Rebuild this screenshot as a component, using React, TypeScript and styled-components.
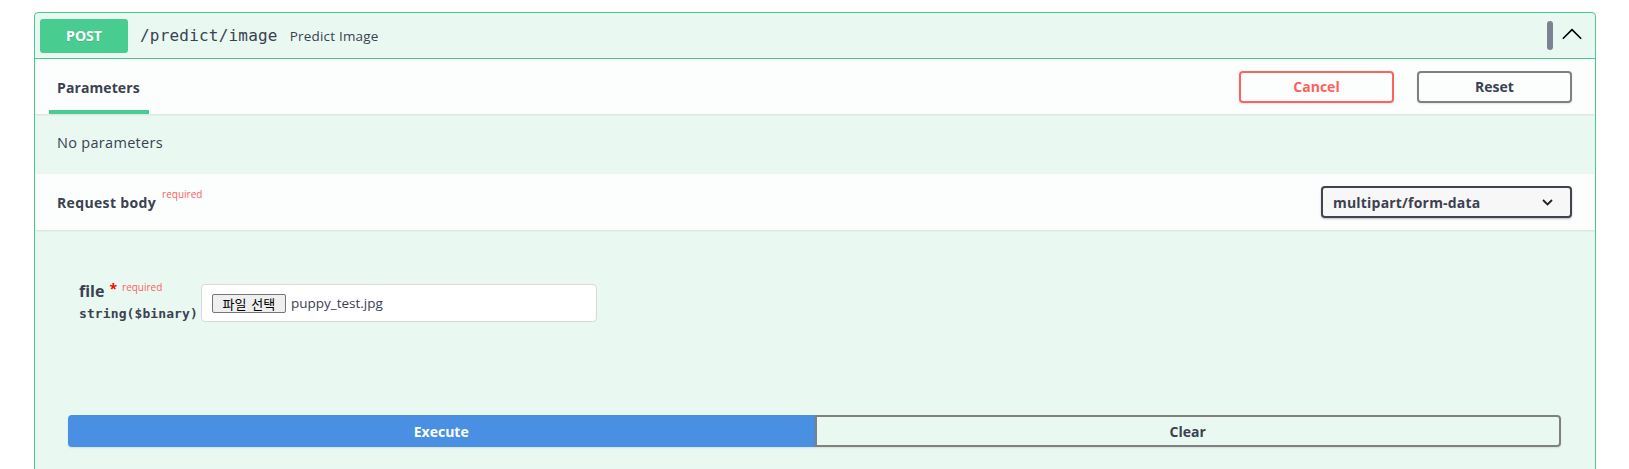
import React from "react";
import styled, { createGlobalStyle } from "styled-components";

const GlobalStyle = createGlobalStyle`
  html, body { margin: 0; padding: 0; background: #ffffff; }
  body { font-family: "Open Sans", "Noto Sans", "Noto Sans CJK KR", sans-serif; color: #3b4151; }
  * { box-sizing: border-box; }
`;

const Page = styled.div`
  padding: 12px 33px 0 34px;
`;

const OpBlock = styled.section`
  border: 1px solid #49cc90;
  border-radius: 4px;
  background: rgba(73, 204, 144, 0.12);
`;

const Summary = styled.div`
  display: flex;
  align-items: center;
  height: 46px;
  padding: 0 13px 0 5px;
  border-bottom: 1px solid #49cc90;
`;

const Method = styled.span`
  width: 88px;
  height: 34px;
  border-radius: 3px;
  background: #49cc90;
  color: #fff;
  font-size: 14px;
  font-weight: 700;
  display: flex;
  align-items: center;
  justify-content: center;
  text-shadow: 0 1px 0 rgba(0, 0, 0, 0.1);
`;

const Path = styled.span`
  margin-left: 12px;
  font-family: "DejaVu Sans Mono", "Liberation Mono", monospace;
  font-size: 16px;
  letter-spacing: 0.2px;
  color: #3b4151;
`;

const Desc = styled.span`
  margin-left: 12px;
  font-size: 13.5px;
  letter-spacing: 0.2px;
  color: #3b4151;
`;

const Spacer = styled.div`
  flex: 1;
`;

const CopyPill = styled.span`
  width: 6px;
  height: 29px;
  border-radius: 3px;
  background: #7d8293;
  margin-right: 9px;
`;

const Arrow = styled.svg`
  width: 20px;
  height: 20px;
  display: block;
`;

const SectionHeader = styled.div<{ $h: number; $pl: number }>`
  display: flex;
  align-items: center;
  justify-content: space-between;
  height: ${(p) => p.$h}px;
  padding: 0 23px 0 ${(p) => p.$pl}px;
  background: rgba(255, 255, 255, 0.85);
  box-shadow: 0 1px 2px rgba(0, 0, 0, 0.1);
  position: relative;
`;

const Tab = styled.div`
  position: relative;
  align-self: stretch;
  display: flex;
  align-items: center;
  padding: 1px 9px 0 8px;
  font-size: 14px;
  font-weight: 700;
  letter-spacing: 0.1px;
  color: #3b4151;

  &::after {
    content: "";
    position: absolute;
    left: 0;
    right: 0;
    bottom: 0;
    height: 4px;
    background: #49cc90;
  }
`;

const BtnGroup = styled.div`
  display: flex;
  gap: 23px;
`;

const OutlineBtn = styled.button<{ $tone: "danger" | "neutral" }>`
  width: 155px;
  height: 32px;
  border-radius: 4px;
  background: transparent;
  border: 2px solid ${(p) => (p.$tone === "danger" ? "#ff6060" : "#808080")};
  color: ${(p) => (p.$tone === "danger" ? "#ff6060" : "#3b4151")};
  font-family: inherit;
  font-size: 14px;
  font-weight: 700;
  box-shadow: 0 1px 2px rgba(0, 0, 0, 0.1);
  padding: 0;
`;

const Description = styled.div`
  height: 60px;
  display: flex;
  align-items: center;
  padding: 0 22px 3px;
  font-size: 14.5px;
  letter-spacing: 0.3px;
  color: #3b4151;
`;

const Title = styled.h4`
  margin: 0;
  font-size: 14px;
  font-weight: 700;
  letter-spacing: 0.35px;
  color: #3b4151;
  display: flex;
  align-items: flex-start;
`;

const Required = styled.span`
  font-size: 10px;
  font-weight: 400;
  letter-spacing: 0;
  color: #ff6060;
  margin-left: 6px;
  position: relative;
  top: -6px;
`;

const Select = styled.div`
  width: 251px;
  height: 32px;
  border: 2px solid #41444e;
  border-radius: 4px;
  background: #f7f7f7;
  box-shadow: 0 1px 2px rgba(0, 0, 0, 0.25);
  display: flex;
  align-items: center;
  justify-content: space-between;
  padding: 0 17px 0 10px;
  font-size: 14px;
  font-weight: 700;
  letter-spacing: 0.2px;
  color: #3b4151;
`;

const Body = styled.div`
  padding: 54px 0 0 44px;
`;

const ParamRow = styled.div`
  display: flex;
  align-items: flex-start;
  gap: 3px;
`;

const ParamName = styled.div`
  display: flex;
  flex-direction: column;
`;

const NameLine = styled.div`
  display: flex;
  align-items: flex-start;
  font-size: 16px;
  font-weight: 700;
  line-height: 20px;
  color: #3b4151;
  margin-top: -3px;
`;

const Star = styled.span`
  color: #ff0000;
  font-size: 14px;
  margin-left: 5px;
  line-height: 16px;
`;

const ReqSmall = styled.span`
  color: #ff6060;
  font-size: 10px;
  font-weight: 400;
  margin-left: 5px;
  line-height: 12px;
`;

const TypeLine = styled.div`
  margin-top: 5px;
  font-family: "DejaVu Sans Mono", "Liberation Mono", monospace;
  font-size: 13px;
  font-weight: 700;
  letter-spacing: 0.1px;
  color: #3b4151;
`;

const FileBox = styled.div`
  width: 396px;
  height: 38px;
  border: 1px solid #d9d9d9;
  border-radius: 4px;
  background: #fff;
  display: flex;
  align-items: center;
  padding: 0 10px;
  gap: 5px;
`;

const FileButton = styled.span`
  height: 19px;
  width: 74px;
  border: 1px solid #767676;
  border-radius: 2px;
  background: #efefef;
  font-family: "Noto Sans CJK KR", sans-serif;
  font-size: 13px;
  line-height: 17px;
  color: #000;
  display: flex;
  align-items: center;
  justify-content: center;
  word-spacing: 2px;
`;

const FileName = styled.span`
  font-size: 13.5px;
  color: #3b4151;
`;

const ExecuteWrapper = styled.div`
  display: flex;
  padding: 93px 34px 30px 33px;
`;

const ExecuteBtn = styled.button`
  flex: 1;
  height: 32px;
  border: 2px solid #4990e2;
  background: #4990e2;
  border-radius: 4px 0 0 4px;
  color: #fff;
  font-family: inherit;
  font-size: 14px;
  font-weight: 700;
  box-shadow: 0 1px 2px rgba(0, 0, 0, 0.1);
  padding: 0;
`;

const ClearBtn = styled.button`
  flex: 1;
  height: 32px;
  border: 2px solid #808080;
  background: transparent;
  border-radius: 0 4px 4px 0;
  color: #3b4151;
  font-family: inherit;
  font-size: 14px;
  font-weight: 700;
  box-shadow: 0 1px 2px rgba(0, 0, 0, 0.1);
  padding: 0;
`;

export default function App() {
  return (
    <>
      <GlobalStyle />
      <Page>
        <OpBlock>
          <Summary>
            <Method>POST</Method>
            <Path>/predict/image</Path>
            <Desc>Predict Image</Desc>
            <Spacer />
            <CopyPill />
            <Arrow viewBox="0 0 20 20">
              <polyline
                points="0.8,12.8 10,3.6 19.2,12.8"
                fill="none"
                stroke="#000"
                strokeWidth="1.6"
              />
            </Arrow>
          </Summary>

          <SectionHeader $h={55} $pl={14}>
            <Tab>Parameters</Tab>
            <BtnGroup>
              <OutlineBtn $tone="danger">Cancel</OutlineBtn>
              <OutlineBtn $tone="neutral">Reset</OutlineBtn>
            </BtnGroup>
          </SectionHeader>

          <Description>No parameters</Description>

          <SectionHeader $h={56} $pl={22}>
            <Title>
              Request body<Required>required</Required>
            </Title>
            <Select>
              <span>multipart/form-data</span>
              <svg width="11" height="7" viewBox="0 0 11 7">
                <polyline
                  points="1,1 5.5,5.5 10,1"
                  fill="none"
                  stroke="#222"
                  strokeWidth="1.8"
                />
              </svg>
            </Select>
          </SectionHeader>

          <Body>
            <ParamRow>
              <ParamName>
                <NameLine>
                  file<Star>*</Star>
                  <ReqSmall>required</ReqSmall>
                </NameLine>
                <TypeLine>string($binary)</TypeLine>
              </ParamName>
              <FileBox>
                <FileButton>파일 선택</FileButton>
                <FileName>puppy_test.jpg</FileName>
              </FileBox>
            </ParamRow>
          </Body>

          <ExecuteWrapper>
            <ExecuteBtn>Execute</ExecuteBtn>
            <ClearBtn>Clear</ClearBtn>
          </ExecuteWrapper>
        </OpBlock>
      </Page>
    </>
  );
}
